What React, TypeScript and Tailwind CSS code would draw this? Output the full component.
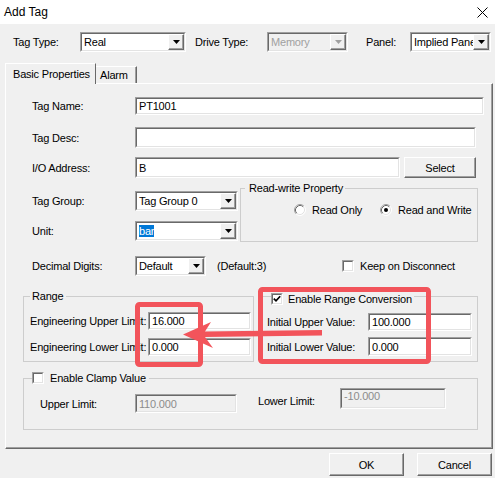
import React from "react";

const RED = "#f2545b";

function Sunken({
  className = "",
  inner = "bg-white",
  children,
}: {
  className?: string;
  inner?: string;
  children?: React.ReactNode;
}) {
  return (
    <div className={`flex shrink-0 border border-[#a0a0a0] border-b-white border-r-white ${className}`}>
      <div
        className={`flex min-w-0 flex-1 items-center overflow-hidden border border-[#696969] border-b-[#e3e3e3] border-r-[#e3e3e3] ${inner}`}
      >
        {children}
      </div>
    </div>
  );
}

function Field({
  className = "",
  value,
  disabled,
  top,
}: {
  className?: string;
  value?: string;
  disabled?: boolean;
  top?: boolean;
}) {
  return (
    <Sunken className={className} inner={`${disabled ? "bg-[#f0f0f0] text-[#8c8c8c]" : "bg-white"} ${top ? "items-start" : ""}`}>
      <span className="whitespace-nowrap pl-[2px]">{value}</span>
    </Sunken>
  );
}

function DropBtn({ disabled }: { disabled?: boolean }) {
  return (
    <div className="flex h-full w-[16px] shrink-0 items-center justify-center border border-white border-b-[#696969] border-r-[#696969] bg-[#f0f0f0] shadow-[inset_-1px_-1px_0_#a0a0a0]">
      <svg width="7" height="4" viewBox="0 0 7 4">
        <path d="M0 0H7L3.5 4Z" fill={disabled ? "#a0a0a0" : "#000"} />
      </svg>
    </div>
  );
}

function Combo({
  className = "",
  disabled,
  children,
}: {
  className?: string;
  disabled?: boolean;
  children: React.ReactNode;
}) {
  return (
    <Sunken className={className} inner={disabled ? "bg-[#f0f0f0]" : "bg-white"}>
      <div className={`min-w-0 flex-1 overflow-hidden whitespace-nowrap pl-[2px] ${disabled ? "text-[#a0a0a0]" : ""}`}>
        {children}
      </div>
      <DropBtn disabled={disabled} />
    </Sunken>
  );
}

function Check({ checked }: { checked?: boolean }) {
  return (
    <Sunken className="h-[12px] w-[12px]" inner="bg-white justify-center">
      {checked && (
        <svg width="8" height="8" viewBox="0 0 8 8">
          <path d="M0.8 3.6L3 5.8L7.2 1.2" stroke="#000" strokeWidth="1.7" fill="none" />
        </svg>
      )}
    </Sunken>
  );
}

function Radio({ checked }: { checked?: boolean }) {
  return (
    <svg width="12" height="12" viewBox="0 0 12 12" className="shrink-0">
      <circle cx="6" cy="6" r="5" fill="#fff" />
      <path d="M2.11 9.89A5.5 5.5 0 0 1 9.89 2.11" stroke="#a0a0a0" fill="none" />
      <path d="M9.89 2.11A5.5 5.5 0 0 1 2.11 9.89" stroke="#fff" fill="none" />
      <path d="M2.82 9.18A4.5 4.5 0 0 1 9.18 2.82" stroke="#696969" fill="none" />
      <path d="M9.18 2.82A4.5 4.5 0 0 1 2.82 9.18" stroke="#e3e3e3" fill="none" />
      {checked && <circle cx="6" cy="6" r="2" fill="#000" />}
    </svg>
  );
}

function Btn({ className = "", children }: { className?: string; children: React.ReactNode }) {
  return (
    <div
      className={`flex shrink-0 items-center justify-center border border-white border-b-[#696969] border-r-[#696969] bg-[#f0f0f0] shadow-[inset_-1px_-1px_0_#a0a0a0] ${className}`}
    >
      {children}
    </div>
  );
}

export default function App() {
  return (
    <div className="relative h-[478px] w-[495px] overflow-hidden bg-[#f0f0f0] font-['Liberation_Sans',Arial,sans-serif] text-[11px] leading-[12px] tracking-[-0.2px] text-black">
      {/* title bar */}
      <div className="flex h-[24px] items-center justify-between bg-white pl-[4px] pr-[7px]">
        <span className="text-[12px] tracking-normal">Add Tag</span>
        <svg width="11" height="11" viewBox="0 0 11 11">
          <path d="M0.5 0.5L10.5 10.5M10.5 0.5L0.5 10.5" stroke="#000" strokeWidth="1" />
        </svg>
      </div>

      {/* top row */}
      <div className="mt-[8px] flex h-[20px] items-center pl-[13px]">
        <span className="w-[67px]">Tag Type:</span>
        <Combo className="h-[20px] w-[106px]">Real</Combo>
        <span className="ml-[9px] w-[72px]">Drive Type:</span>
        <Combo className="h-[20px] w-[81px]" disabled>
          Memory
        </Combo>
        <span className="ml-[18px] w-[44px]">Panel:</span>
        <Combo className="h-[20px] w-[81px]">Implied Panel</Combo>
      </div>

      {/* tabs */}
      <div className="mt-[11px] flex h-[20px] items-end pl-[5px]">
        <div className="relative z-10 -mb-px h-[21px] w-[91px] border border-b-0 border-white border-r-[#696969] bg-[#f0f0f0] pl-[7px] pt-[4px]">
          Basic Properties
        </div>
        <div className="flex h-[17px] w-[41px] items-center border border-b-0 border-l-0 border-white border-r-[#696969] pl-[4px] shadow-[inset_-1px_0_0_#a0a0a0]">
          Alarm
        </div>
      </div>

      {/* tab page */}
      <div className="ml-[5px] flex h-[366px] w-[488px] flex-col border border-white border-b-[#696969] border-r-[#696969] pl-[17px] pt-[13px] shadow-[inset_-1px_-1px_0_#a0a0a0]">
        <div className="flex h-[18px] items-center">
          <span className="ml-[9px] w-[103px]">Tag Name:</span>
          <Field className="h-[18px] w-[349px]" value="PT1001" />
        </div>
        <div className="mt-[12px] flex h-[21px] items-center">
          <span className="ml-[9px] w-[103px]">Tag Desc:</span>
          <Field className="h-[21px] w-[341px]" value="" />
        </div>
        <div className="mt-[9px] flex h-[21px] items-center">
          <span className="ml-[9px] w-[103px]">I/O Address:</span>
          <Field className="h-[21px] w-[265px]" value="B" />
          <Btn className="ml-[4px] h-[21px] w-[72px]">Select</Btn>
        </div>

        <div className="mt-[4px] flex">
          <div className="flex w-[217px] flex-col">
            <div className="mt-[9px] flex h-[20px] items-center">
              <span className="ml-[9px] w-[103px]">Tag Group:</span>
              <Combo className="h-[20px] w-[103px]">Tag Group 0</Combo>
            </div>
            <div className="mt-[10px] flex h-[20px] items-center">
              <span className="ml-[9px] w-[103px]">Unit:</span>
              <Combo className="h-[20px] w-[103px]">
                <span className="bg-[#0078d7] text-white">bar</span>
              </Combo>
            </div>
          </div>
          <fieldset className="h-[60px] w-[238px] border border-[#cdcdcd]">
            <legend className="ml-[4px] pl-[4px] pr-[2px] leading-[12px]">Read-write Property</legend>
            <div className="mt-[10px] flex h-[12px] items-center pl-[53px]">
              <div className="flex w-[86px] items-center gap-[6px]">
                <Radio />
                <span>Read Only</span>
              </div>
              <div className="flex items-center gap-[6px]">
                <Radio checked />
                <span>Read and Write</span>
              </div>
            </div>
          </fieldset>
        </div>

        <div className="mt-[14px] flex h-[20px] items-center">
          <span className="ml-[9px] w-[103px]">Decimal Digits:</span>
          <Combo className="h-[20px] w-[71px]">Default</Combo>
          <span className="ml-[11px] w-[125px]">(Default:3)</span>
          <Check />
          <span className="ml-[6px]">Keep on Disconnect</span>
        </div>

        <div className="mt-[11px] flex items-start">
          <fieldset className="mt-[3px] h-[72px] w-[231px] border border-[#cdcdcd]">
            <legend className="ml-[6px] pl-[2px] pr-[3px] leading-[12px]">Range</legend>
            <div className="mt-[10px] flex h-[18px] items-center">
              <span className="ml-[6px] w-[118px] overflow-hidden whitespace-nowrap">Engineering Upper Limit:</span>
              <Field className="h-[18px] w-[103px]" value="16.000" />
            </div>
            <div className="mt-[8px] flex h-[18px] items-center">
              <span className="ml-[6px] w-[118px] overflow-hidden whitespace-nowrap">Engineering Lower Limit:</span>
              <Field className="h-[18px] w-[103px]" value="0.000" />
            </div>
          </fieldset>
          <fieldset className="ml-[7px] h-[75px] w-[217px] border border-[#cdcdcd]">
            <legend className="ml-[9px] flex h-[18px] items-end pr-[2px]">
              <Check checked />
              <span className="ml-[5px]">Enable Range Conversion</span>
            </legend>
            <div className="mt-[8px] flex h-[18px] items-center">
              <span className="ml-[5px] w-[101px]">Initial Upper Value:</span>
              <Field className="h-[18px] w-[104px]" value="100.000" />
            </div>
            <div className="mt-[6px] flex h-[19px] items-center">
              <span className="ml-[5px] w-[101px]">Initial Lower Value:</span>
              <Field className="h-[19px] w-[104px]" value="0.000" />
            </div>
          </fieldset>
        </div>

        <fieldset className="mt-[10px] h-[58px] w-[455px] border border-[#cdcdcd]">
          <legend className="ml-[8px] flex h-[12px] items-center pr-[3px]">
            <Check />
            <span className="ml-[6px]">Enable Clamp Value</span>
          </legend>
          <div className="mt-[4px] flex items-start">
            <div className="mt-[6px] flex h-[19px] items-center">
              <span className="ml-[16px] w-[95px]">Upper Limit:</span>
              <Field className="h-[19px] w-[102px]" value="110.000" disabled />
            </div>
            <span className="ml-[21px] mt-[7px] w-[82px]">Lower Limit:</span>
            <Field className="h-[21px] w-[106px]" value="-10.000" disabled top />
          </div>
        </fieldset>
      </div>

      {/* buttons */}
      <div className="mt-[4px] flex justify-end gap-[13px] pr-[3px]">
        <Btn className="h-[23px] w-[75px]">OK</Btn>
        <Btn className="h-[23px] w-[75px]">Cancel</Btn>
      </div>

      {/* annotation overlay */}
      <svg className="pointer-events-none absolute inset-0" width="495" height="478" viewBox="0 0 495 478">
        <rect x="137.5" y="304.5" width="63" height="60" rx="2" fill="none" stroke={RED} strokeWidth="5" />
        <rect x="260.5" y="289.5" width="168" height="72" rx="2" fill="none" stroke={RED} strokeWidth="5" />
        <polygon points="183,334.5 211,322 205,331.5 322,330 322,335.5 205,337 213,348" fill={RED} />
      </svg>
    </div>
  );
}
